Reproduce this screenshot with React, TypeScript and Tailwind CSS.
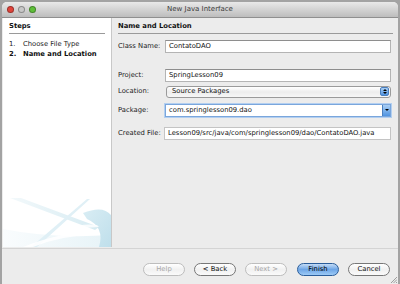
import React from 'react'

const font = { fontFamily: '"DejaVu Sans", "Liberation Sans", sans-serif' }

function TrafficLight({ color }: { color: string }) {
  return <span className={`block w-[7px] h-[7px] rounded-full border border-black/30 ${color}`} />
}

function TextField({ value }: { value: string }) {
  return (
    <div className="flex items-center h-[13px] w-[226px] bg-white pl-[3px] border border-[#b4b4b4] border-t-[#8e8e8e]">
      <span className="text-[6.8px] leading-none text-[#111]">{value}</span>
    </div>
  )
}

function Row({ label, children, mt }: { label: string; children: React.ReactNode; mt: string }) {
  return (
    <div className={`flex items-center ${mt}`}>
      <span className="w-[47px] text-[6.8px] leading-none text-[#222]">{label}</span>
      {children}
    </div>
  )
}

function PushButton({ label, kind }: { label: string; kind?: 'disabled' | 'default' }) {
  if (kind === 'default') {
    return (
      <div className="flex items-center justify-center w-[42px] h-[13px] rounded-full border border-[#2a5d9a] bg-gradient-to-b from-[#c4dcf6] via-[#6ea6e6] to-[#9ccaf6] text-[6.8px] leading-none text-black">
        {label}
      </div>
    )
  }
  return (
    <div
      className={`flex items-center justify-center w-[42px] h-[13px] rounded-full border bg-gradient-to-b from-white via-[#f1f1f1] to-[#fafafa] text-[6.8px] leading-none ${
        kind === 'disabled' ? 'border-[#bdbdbd] text-[#a8a8a8]' : 'border-[#777] text-[#111]'
      }`}
    >
      {label}
    </div>
  )
}

function Wave() {
  return (
    <svg width="108" height="52" viewBox="0 0 108 52" className="block">
      <defs>
        <linearGradient id="g1" x1="0" y1="0" x2="1" y2="0">
          <stop offset="0" stopColor="#f3f9fb" />
          <stop offset="1" stopColor="#d6ebf2" />
        </linearGradient>
        <linearGradient id="g2" x1="0" y1="0" x2="1" y2="0">
          <stop offset="0" stopColor="#f7fbfd" />
          <stop offset="1" stopColor="#dceef4" />
        </linearGradient>
        <linearGradient id="g3" x1="0" y1="0" x2="1" y2="1">
          <stop offset="0" stopColor="#d9edf4" />
          <stop offset="1" stopColor="#bfdfeb" />
        </linearGradient>
      </defs>
      <path d="M0 34 Q50 44 108 40 L108 52 L0 52 Z" fill="url(#g2)" opacity="0.7" />
      <path d="M7 3 L18 3 L96 32 L92 35 Z" fill="url(#g1)" />
      <path d="M84 4 L87 4 L34 52 L28 52 Z" fill="#e0f0f6" />
      <path d="M80 18 Q100 10 108 20 L108 52 L96 52 Q102 32 84 24 Z" fill="url(#g3)" />
      <path d="M62 34 Q80 28 94 30 L96 32 Q78 32 64 38 Z" fill="#ffffff" opacity="0.8" />
      <path d="M20 52 Q60 36 92 38 L92 40 Q60 40 30 52 Z" fill="#ffffff" opacity="0.85" />
    </svg>
  )
}

export default function App() {
  return (
    <div className="w-[400px] h-[284px] bg-[#a3a3a3] pl-[2px] pr-[2px] pt-[2px] overflow-hidden" style={font}>
      <div className="flex flex-col h-[282px] bg-[#ececec] rounded-t-[5px] overflow-hidden">
        {/* Title bar */}
        <div className="relative flex items-center h-[16px] shrink-0 bg-gradient-to-b from-[#e9e9e9] to-[#bdbdbd] border-b border-[#8f8f8f] px-[5px] gap-[4px]">
          <TrafficLight color="bg-[#e0443b]" />
          <TrafficLight color="bg-[#c8c8c8]" />
          <TrafficLight color="bg-[#5fbf3a]" />
          <span className="absolute inset-0 flex items-center justify-center text-[7px] text-[#3a3a3a]">New Java Interface</span>
        </div>

        <div className="flex h-[229px] shrink-0">
          {/* Steps panel */}
          <div className="flex flex-col w-[109px] bg-white border-r border-[#c8c8c8] ml-[1px]">
            <div className="px-[6px] pt-[5px]">
              <div className="text-[6.8px] font-bold leading-none text-[#111] pb-[3px] border-b border-[#9a9a9a]">Steps</div>
              <div className="mt-[7px] flex text-[6.8px] leading-none text-[#222]">
                <span className="w-[14px]">1.</span>
                <span>Choose File Type</span>
              </div>
              <div className="mt-[3px] flex text-[6.8px] font-bold leading-none text-[#111]">
                <span className="w-[14px]">2.</span>
                <span>Name and Location</span>
              </div>
            </div>
            <div className="mt-auto">
              <Wave />
            </div>
          </div>

          {/* Form panel */}
          <div className="flex-1 pl-[6px] pr-[5px] pt-[5px]">
            <div className="text-[6.8px] font-bold leading-none text-[#111] pb-[3px] border-b border-[#9a9a9a]">Name and Location</div>
            <Row label="Class Name:" mt="mt-[6px]">
              <TextField value="ContatoDAO" />
            </Row>
            <Row label="Project:" mt="mt-[16px]">
              <TextField value="SpringLesson09" />
            </Row>
            <Row label="Location:" mt="mt-[4px]">
              <div className="flex items-center h-[12px] w-[225px] ml-[1px] rounded-[3px] border border-[#9a9a9a] bg-gradient-to-b from-white via-[#ededed] to-[#f7f7f7] pl-[5px] pr-[1px]">
                <span className="flex-1 text-[6.8px] leading-none text-[#111]">Source Packages</span>
                <span className="flex flex-col items-center justify-center w-[9px] h-[9px] rounded-[2px] bg-gradient-to-b from-[#a9cff5] to-[#4f93e0] border border-[#4a7fbf]">
                  <span className="block w-0 h-0 border-x-[2px] border-x-transparent border-b-[2px] border-b-black" />
                  <span className="block w-0 h-0 mt-[1px] border-x-[2px] border-x-transparent border-t-[2px] border-t-black" />
                </span>
              </div>
            </Row>
            <Row label="Package:" mt="mt-[6px]">
              <div className="flex items-center h-[13px] w-[226px] bg-white border border-[#7aa6dc] shadow-[0_0_0_1px_#b3cff0] pl-[3px]">
                <span className="flex-1 text-[6.8px] leading-none text-[#111]">com.springlesson09.dao</span>
                <span className="flex items-center justify-center w-[8px] h-full bg-gradient-to-b from-[#a9cff5] to-[#4f93e0] border-l border-[#4a7fbf]">
                  <span className="block w-0 h-0 border-x-[2px] border-x-transparent border-t-[2px] border-t-black" />
                </span>
              </div>
            </Row>
            <Row label="Created File:" mt="mt-[10px]">
              <div className="flex items-center h-[13px] w-[227px] -ml-[1px] bg-white border border-[#c4c4c4] pl-[3px]">
                <span className="text-[6.8px] leading-none text-[#111] whitespace-nowrap">Lesson09/src/java/com/springlesson09/dao/ContatoDAO.java</span>
              </div>
            </Row>
          </div>
        </div>

        <div className="h-[2px] mt-[1px] border-t border-[#d4d4d4]" />

        {/* Buttons */}
        <div className="relative flex items-center justify-end gap-[9px] pr-[8px] mt-[13px]">
          <PushButton label="Help" kind="disabled" />
          <PushButton label="< Back" />
          <PushButton label="Next >" kind="disabled" />
          <div className="ml-[1px]">
            <PushButton label="Finish" kind="default" />
          </div>
          <PushButton label="Cancel" />
        </div>
        <div className="mt-auto flex justify-end pr-[1px] pb-[1px]">
          <svg width="6" height="6" viewBox="0 0 6 6">
            <path d="M6 0 L0 6 M6 2.5 L2.5 6 M6 5 L5 6" stroke="#8a8a8a" strokeWidth="0.8" />
          </svg>
        </div>
      </div>
    </div>
  )
}
